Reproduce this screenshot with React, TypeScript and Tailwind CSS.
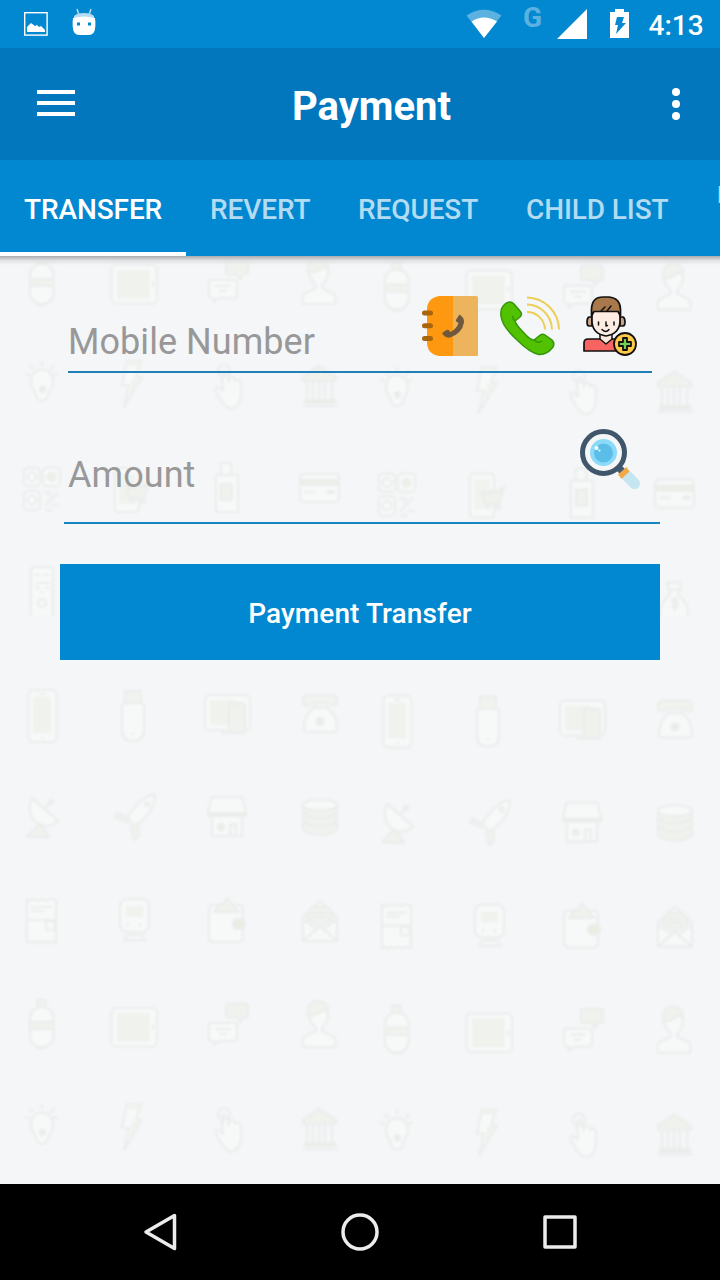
import React from "react";

function IconSheetRowsAB() {
  return (
    <>
      {/* gas bottle */}
      <rect x="37" y="1000" width="9" height="7" rx="2" className="fill-[#f0f2ee]" />
      <rect x="30" y="1007" width="23.5" height="40" rx="11" />
      <path d="M30 1022h23M30 1029h23M38 1048h7" />
      <rect x="31" y="1023" width="22" height="5" className="fill-[#f0f2ee]" stroke="none" />
      {/* tablet */}
      <rect x="111.5" y="1008" width="45.5" height="38.5" rx="5" />
      <rect x="117" y="1013" width="32.5" height="28.5" className="fill-[#f0f2ee]" stroke="none" />
      <path d="M153 1025v4" />
      {/* chat */}
      <path d="M229 1003.5h16q3 0 3 3v8q0 3-3 3h-2l-3 5-3-5h-8q-3 0-3-3v-8q0-3 3-3z" className="fill-[#f0f2ee]" />
      <path d="M212 1023h22q3 0 3 3v12q0 3-3 3h-15l-5 4v-4h-2q-3 0-3-3v-12q0-3 3-3zM216 1029h14M220 1034h6" />
      {/* person */}
      <path d="M308 1014q0-12 10-12t10 12q0 8-6 14v3l12 6q2 2 1 10h-32q-1-8 1-10l12-6v-3q-7-6-7-14z" />
      <path d="M308 1016q12-1 16-7l4 4q1-12-10-12t-10 15z" className="fill-[#f0f2ee]" />
      {/* bulb */}
      <path d="M42 1112.500q-11 1-11 12 0 6 4 10l2 7q5 4 10 0l2-7q4-4 4-10 0-11-11-12zM42 1105v3M30 1109l3 3M54 1109l-3 3M26 1117l3 1M57 1117l-3 1M42 1136v-6" />
      <circle cx="42.500" cy="1132" r="2.500" className="fill-[#e9ebe7]" />
      {/* bolt */}
      <path d="M127 1104h14l-5 16h6l-18 30 5-22h-7z" />
      <path d="M127 1104h14l-2 5h-13zM132 1122l9-1-12 19z" className="fill-[#f0f2ee]" stroke="none" />
      {/* hand */}
      <path d="M224 1119q-3-3 0-4 3 0 4 3l1 7V1121q5-3 6 3 4-3 6 2v8q1 12-7 17-8 2-13-8l-4-7q-3-5 1-6l5 4-1-13z" />
      <circle cx="224" cy="1114" r="6" className="fill-none" />
      {/* bank */}
      <path d="M303 1120l16-11 17 11v4h-33z" className="fill-[#f0f2ee]" />
      <path d="M307 1125v17M313 1125v17M319 1125v17M325 1125v17M332 1125v17M304 1149h33" />
      <rect x="305" y="1143" width="30" height="3" className="fill-[#e8ebe4]" />
    </>
  );
}

function IconSheet() {
  return (
    <>
      <IconSheetRowsAB />
      <g transform="translate(0 -743)">
        <IconSheetRowsAB />
      </g>
      {/* qr code */}
      <rect x="24" y="468" width="16" height="18" rx="4" />
      <rect x="43" y="468" width="17" height="18" rx="4" />
      <rect x="24" y="491" width="16" height="19" rx="4" />
      <circle cx="32" cy="477" r="4.500" />
      <circle cx="51.500" cy="477" r="4" className="fill-[#eef0e8]" />
      <circle cx="32" cy="500" r="4.500" />
      <path d="M46 493h4v4M57 493l-11 12M53 505h6M46 510h5" />
      {/* mobile shop */}
      <rect x="115" y="468" width="24" height="44" rx="4" />
      <rect x="119" y="474" width="16" height="30" className="fill-[#f1f3ef]" stroke="none" />
      <path d="M125 486h20l5-5M127 489l3 9h14l4-13z" className="fill-[#f0f2ee]" />
      <circle cx="133" cy="501" r="2" />
      <circle cx="143" cy="501" r="2" />
      {/* swipe terminal */}
      <path d="M221 463h10v12h-10zM217 475h19q2 0 2 3v34h-22v-34q0-3 1-3z" />
      <path d="M221 484h11v16h-11z" className="fill-[#f0f2ee]" />
      {/* credit card */}
      <rect x="300" y="474" width="39" height="28" rx="4" />
      <path d="M300 480h39v5h-39zM328 491h6v2h-6z" className="fill-[#eceee8]" />
      <path d="M305 492h10" />
      {/* remote */}
      <path d="M31 615v-44q0-4 4-4h14q4 0 4 4v44" />
      <path d="M36 575h3M45 575h3M36 583h3M41 583h3M46 583h3M36 588h3M46 588h3M42 592v1" />
      <circle cx="42" cy="603" r="4" />
      {/* money bag */}
      <path d="M306 609q-2-11 9-20l-3-12h14l-3 12q11 9 10 20M314 584h12" />
      <path d="M323 594q-6-2-6 1t6 3q0 5-6 3M320 592v13" />
      {/* phone */}
      <rect x="28.500" y="690" width="28" height="52" rx="5" />
      <rect x="33" y="697" width="18" height="36" className="fill-[#f0f2ee]" stroke="none" />
      <path d="M40 694h5M42 738h1" />
      {/* usb stick */}
      <rect x="125" y="691" width="16" height="12" className="fill-[#f1f3ef]" />
      <path d="M122 706q0-3 3-3h16q3 0 3 3v24q0 11-11 11t-11-11zM133 733v1" />
      {/* devices */}
      <rect x="205" y="695" width="45" height="35" rx="5" />
      <rect x="210" y="700" width="25" height="25" className="fill-[#f0f2ee]" stroke="none" />
      <rect x="229" y="703" width="16" height="30" rx="3" className="fill-[#f0f2ee]" />
      <path d="M222 733h7M236 706h2" />
      {/* telephone */}
      <path d="M303 704v-4q0-5 5-5h24q5 0 5 5v4q-5 3-9-1h-16q-4 4-9 1z" className="fill-[#f1f3ef]" />
      <path d="M314 706v2q-10 6-10 21 0 3 4 3h25q4 0 4-3 0-15-10-21v-2q-7 4-13 0z" />
      <circle cx="320" cy="721.500" r="3.500" className="fill-[#e9ede2]" />
      {/* satellite dish */}
      <path d="M32 798l26 23q-11 9-21 2-11-9-5-25zM45 809l6-8" />
      <circle cx="51" cy="802" r="2" className="fill-[#e9ebe7]" />
      <path d="M38 825l4 1 7 11H27z" className="fill-[#f0f2ee]" />
      {/* rocket */}
      <path d="M155 795q-12-1-28 23l8 8q20-14 20-31z" />
      <path d="M127 818l-9-5-3 4 12 5M131 826l3 14 5-4-1-11" className="fill-[#f0f2ee]" />
      <circle cx="147" cy="804" r="2" />
      {/* shop */}
      <path d="M211 800q0-3 3-3h26q3 0 3 3l3 12v3h-38v-3zM212 818v18h30v-18M230 836v-12h6v12" />
      <path d="M208 813h38v3h-38z" className="fill-[#e9ebe7]" strokeDasharray="3 2" />
      <circle cx="221" cy="827" r="3" className="fill-[#eceee4]" />
      {/* coins */}
      <path d="M303 805v24q4 6 17 6t17-6v-24" className="fill-[#f0f2ee]" />
      <ellipse cx="320" cy="805" rx="17" ry="5.500" />
      <path d="M303 812q4 6 17 6t17-6M303 820q4 6 17 6t17-6" className="fill-none" />
      {/* receipt */}
      <path d="M27 899l3 2 4-2 4 2 4-2 4 2 4-2 6 1v43l-4-2-4 2-4-2-4 2-4-2-4 2-4-2-1 1zM32 907h19M32 911h12M28 920h27" />
      <rect x="46" y="921" width="9" height="9" rx="2" />
      {/* train */}
      <rect x="120" y="899" width="29" height="33" rx="7" />
      <rect x="126" y="906" width="17" height="11" className="fill-[#f0f2ee]" stroke="none" />
      <path d="M128 924v2M140 924v2M125 937l3-2h13l3 2M124 940h22" />
      {/* wallet */}
      <path d="M209 910q0-4 4-5h26q4 1 4 5v27q0 5-5 5h-24q-5 0-5-5z" />
      <path d="M214 912l6-8 3 1 4-7 12 14z" className="fill-[#f0f2ee]" />
      <path d="M214 912h26" />
      <rect x="233" y="919" width="12" height="10" rx="4.500" className="fill-[#e9ede2]" />
      {/* envelope */}
      <path d="M303 917l17-16 17 16v24h-34zM303 941l17-15 17 15" />
      <path d="M307 918l5-11h16l5 11-13 9z" className="fill-[#f0f2ee]" />
      <path d="M303 919l12 9M337 919l-12 9M313 913h13M313 917h13" />
    </>
  );
}

function Backdrop() {
  return (
    <svg
      className="absolute inset-0 h-[928px] w-[720px] fill-[#f7f9f9] stroke-[#ebedec] blur-[0.9px]"
      viewBox="0 256 720 928"
      strokeWidth="2.2"
      strokeLinejoin="round"
      strokeLinecap="round"
      aria-hidden="true"
    >
      <IconSheet />
      <g transform="translate(355 5.600)">
        <IconSheet />
      </g>
    </svg>
  );
}

function StatusBar() {
  return (
    <div className="flex h-12 shrink-0 bg-[#0288d1] text-white">
      <svg className="h-12 w-[120px]" viewBox="0 0 120 48">
        <rect x="24.700" y="12.700" width="22.400" height="22.400" fill="none" stroke="#fff" strokeWidth="1.400" />
        <path d="M27 32v-5l4-4 4 3 2-1 2 2 2-1 4 4v2z" fill="#fff" />
        <path d="M77 9l2 6M91 9l-2 6" stroke="#b3dbf1" strokeWidth="1.500" />
        <path d="M74 16q3-3 10-3t10 3v4H74z" fill="#b3dbf1" />
        <path d="M73 18q11-3 22 0 1 8-.5 13-1.500 4-6 4h-9q-4.500 0-6-4Q72 26 73 18z" fill="#fff" />
        <path d="M77 22.500h3v3h-3zM88 22.500h3v3h-3z" fill="#0288d1" />
      </svg>
      <div className="grow" />
      <svg className="h-12 w-[56px]" viewBox="460 0 56 48">
        <path d="M466.500 15.500Q484 4 501.500 15.500L484 38z" fill="#5bb1e0" />
        <path d="M471.500 21.500Q484 13.500 497 21.500L484 38z" fill="#fff" />
      </svg>
      <span className="w-[40px] pl-[7px] pt-[3px] text-[28px] font-bold leading-[30px] text-[#5bb1e0]">G</span>
      <svg className="h-12 w-[80px]" viewBox="556 0 80 48">
        <path d="M557 39L587 9v30z" fill="#fff" />
        <path d="M615 9h9v3h5v26h-19V12h5z" fill="#fff" />
        <path d="M617 17h7l-2 6h4l-10 11 2-9h-3z" fill="#0288d1" />
      </svg>
      <span className="w-[84px] whitespace-nowrap pl-[12.500px] pt-[10px] text-[28px] font-medium leading-[32px]">4:13</span>
    </div>
  );
}

function Toolbar() {
  return (
    <header className="flex h-28 shrink-0 items-center bg-[#0277bd] text-white">
      <div className="flex w-[292px] flex-col gap-[7px] pb-[2px] pl-[37px]">
        <span className="h-1 w-[38px] bg-white" />
        <span className="h-1 w-[38px] bg-white" />
        <span className="h-1 w-[38px] bg-white" />
      </div>
      <h1 className="w-[380px] pt-[6px] text-[40px] font-bold leading-[48px]">Payment</h1>
      <div className="flex flex-col gap-1">
        <span className="size-2 rounded-full bg-white" />
        <span className="size-2 rounded-full bg-white" />
        <span className="size-2 rounded-full bg-white" />
      </div>
    </header>
  );
}

function Tabs() {
  return (
    <nav className="flex h-24 shrink-0 overflow-hidden whitespace-nowrap bg-[#0288d1] text-[28px] font-medium leading-[32px] tracking-[-0.1px] text-[#b3dbf1]">
      <div className="w-[186px] shrink-0 border-b-4 border-white pl-6 pt-[34px] text-white">TRANSFER</div>
      <div className="w-[148px] shrink-0 pl-6 pt-[34px]">REVERT</div>
      <div className="w-[168px] shrink-0 pl-6 pt-[34px]">REQUEST</div>
      <div className="w-[190px] shrink-0 pl-6 pt-[34px]">CHILD LIST</div>
      <div className="shrink-0 pl-[25px] pt-[21px] text-[24px] leading-[28px]">P</div>
    </nav>
  );
}

function AddressBook() {
  return (
    <svg className="h-[60px] w-[57px]" viewBox="0 0 57 60">
      <path d="M17 0h14v60H17Q5 58 5 46V14Q5 2 17 0z" fill="#ff9811" />
      <path d="M31 0h23.500q1.500 0 1.500 1.500v57q0 1.500-1.500 1.500H31z" fill="#ecb45c" />
      <path d="M2.500 17h6M2.500 29.700h6M2.500 42.400h6" stroke="#a8650b" strokeWidth="5" strokeLinecap="round" />
      <path d="M37.500 18.500q5 3 4.500 8-2 11-14 15-5 1-8-4.500l4.500-3q2-1 3 1l1 1q6-3 8-9l-1.500-1q-2-1-.5-3z" fill="#70583e" />
    </svg>
  );
}

function CallIcon() {
  return (
    <svg className="h-[60px] w-[61px]" viewBox="0 0 61 60">
      <path
        d="M1 20Q0 12 5 8Q10 4 14 8L20 15Q23 18 20 21L15 25Q16 29 24 37Q30 44 34 44L39 40Q42 37 45 39L52 44Q55 47 53 51Q47 59 39 58.500Q30 57 16 43Q2 30 1 20Z"
        fill="#51c102"
        stroke="#35960a"
        strokeWidth="1.500"
      />
      <path d="M15 25q-3-3-2-5M34 44q4 4 8 1" fill="none" stroke="#35960a" strokeWidth="1.500" />
      <path d="M27 16A18 18 0 0 1 45 33.500M27 8.500A25.500 25.500 0 0 1 52 33.500M27 1.500A32.500 32.500 0 0 1 59 33.500" fill="none" stroke="#edcf58" strokeWidth="2" />
    </svg>
  );
}

function AddContact() {
  return (
    <svg className="h-[60px] w-[54px]" viewBox="0 0 54 60" strokeLinejoin="round" strokeLinecap="round">
      <path d="M1 55V47q0-4 4-4h33v12z" fill="#f86461" stroke="#111" strokeWidth="1.700" />
      <path d="M17 38v5l6 5 6-5v-5z" fill="#ffeadf" stroke="#111" strokeWidth="1.500" />
      <path d="M9 21H6q-2 1-2 5t2 4h3zM37 21h3q2 1 2 5t-2 4h-3z" fill="#c9a48a" stroke="#111" strokeWidth="1.700" />
      <path d="M9 14h28v12q-1 12-14 14Q10 38 9 26z" fill="#ffede3" stroke="#111" strokeWidth="1.700" />
      <path d="M8.500 20v-7Q9 1 20 1h6q11 1 11.500 12v7L35 15.500H11z" fill="#a9784b" stroke="#111" strokeWidth="1.700" />
      <path d="M18 15l4-4M24 15l4-5" stroke="#111" strokeWidth="1.500" />
      <path d="M15.500 26v3M31 26v3M23 26v4l1.500-.5M19 33.500q4 4 7 0" stroke="#111" strokeWidth="1.500" fill="none" />
      <circle cx="42" cy="48" r="11" fill="#ffca4a" stroke="#111" strokeWidth="1.800" />
      <path d="M40 42h4v4h4v4h-4v4h-4v-4h-4v-4h4z" fill="#75cf55" stroke="#111" strokeWidth="1.800" />
    </svg>
  );
}

function Magnifier() {
  return (
    <svg className="h-[60px] w-[60px]" viewBox="0 0 60 60">
      <path d="M38 38l6 6" stroke="#445b70" strokeWidth="7" />
      <path d="M47 47l7.500 7.500" stroke="#c5e6f0" strokeWidth="11" strokeLinecap="round" />
      <path d="M38 45.500l8.500-7.500 3 4.500-8 7.500z" fill="#f5a944" />
      <circle cx="23.500" cy="23.500" r="21" fill="#f4f6f8" stroke="#3f566b" strokeWidth="5" />
      <circle cx="23.500" cy="23.500" r="13.500" fill="#8bdaf8" />
      <circle cx="23.500" cy="24" r="9.500" fill="#5abee8" />
      <circle cx="16.500" cy="19" r="2" fill="#fff" />
      <circle cx="19.500" cy="21.500" r="1" fill="#fff" />
    </svg>
  );
}

function NavBar() {
  return (
    <footer className="flex h-24 shrink-0 items-center bg-black">
      <svg className="h-24 w-full" viewBox="0 0 720 96" fill="none" stroke="#ececec" strokeWidth="3.500" strokeLinejoin="round">
        <path d="M174.500 31.500L146 48l28.500 16.500z" />
        <circle cx="360" cy="48" r="17" />
        <rect x="545" y="33" width="30" height="30" />
      </svg>
    </footer>
  );
}

export default function App() {
  return (
    <div className="flex h-[1280px] w-[720px] flex-col overflow-hidden bg-[#f4f6f8] font-['Roboto',sans-serif]">
      <StatusBar />
      <Toolbar />
      <Tabs />
      <main className="relative h-[928px] shrink-0 overflow-hidden">
        <Backdrop />
        <div className="relative h-[9px] bg-linear-to-b from-[#a9adb0] via-[#dfe1e3] to-transparent" />
        <form className="relative px-[60px]">
          <div className="ml-2 mr-2 flex h-[108px] items-start border-b-2 border-[#217fb8] pt-[31px]">
            <span className="w-[354px] pt-[25px] text-[36px] leading-[42px] tracking-[0.05px] text-[#989898]">Mobile Number</span>
            <AddressBook />
            <span className="w-[21px]" />
            <CallIcon />
            <span className="w-[22px]" />
            <AddContact />
          </div>
          <div className="ml-1 mt-[56px] flex h-[95px] items-start border-b-2 border-[#1686c3]">
            <span className="w-[516px] pl-1 pt-[25px] text-[36px] leading-[42px] tracking-[0.05px] text-[#989898]">Amount</span>
            <Magnifier />
          </div>
          <button
            type="button"
            className="mt-10 block h-24 w-full bg-[#0288d1] pt-1 text-center text-[28px] font-medium leading-[32px] tracking-[0.1px] text-white"
          >
            Payment Transfer
          </button>
        </form>
      </main>
      <NavBar />
    </div>
  );
}
